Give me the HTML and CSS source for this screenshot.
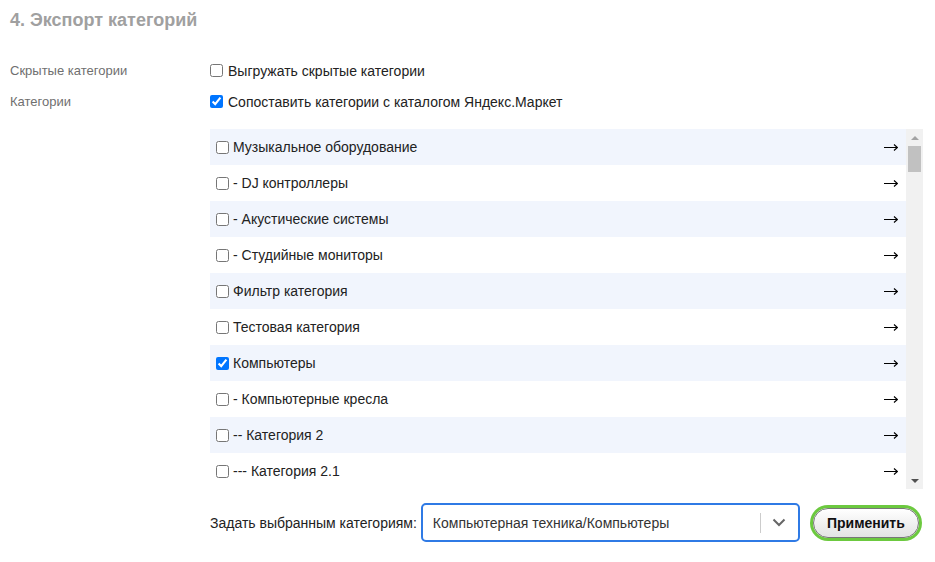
FILE: index.html
```html
<!DOCTYPE html>
<html lang="ru">
<head>
<meta charset="utf-8">
<title>Экспорт категорий</title>
<link rel="stylesheet" href="styles.css">
</head>
<body>
<div class="page">
  <h2 class="title">4. Экспорт категорий</h2>
  <div class="field">
    <div class="field-label">Скрытые категории</div>
    <label class="opt"><input type="checkbox"> Выгружать скрытые категории</label>
  </div>
  <div class="field">
    <div class="field-label">Категории</div>
    <label class="opt"><input type="checkbox" checked> Сопоставить категории с каталогом Яндекс.Маркет</label>
  </div>
  <div class="field field-list">
    <div class="field-label"></div>
    <div class="content">
      <div class="listbox">
        <div class="list">
          <div class="row alt"><label><input type="checkbox"> Музыкальное оборудование</label><svg class="arrow" width="14" height="9" viewBox="0 0 14 9"><path d="M0 4.5H13.5M10 1.5L13.5 4.5L10 7.5" fill="none" stroke="#000" stroke-width="1.2"/></svg></div>
          <div class="row"><label><input type="checkbox"> - DJ контроллеры</label><svg class="arrow" width="14" height="9" viewBox="0 0 14 9"><path d="M0 4.5H13.5M10 1.5L13.5 4.5L10 7.5" fill="none" stroke="#000" stroke-width="1.2"/></svg></div>
          <div class="row alt"><label><input type="checkbox"> - Акустические системы</label><svg class="arrow" width="14" height="9" viewBox="0 0 14 9"><path d="M0 4.5H13.5M10 1.5L13.5 4.5L10 7.5" fill="none" stroke="#000" stroke-width="1.2"/></svg></div>
          <div class="row"><label><input type="checkbox"> - Студийные мониторы</label><svg class="arrow" width="14" height="9" viewBox="0 0 14 9"><path d="M0 4.5H13.5M10 1.5L13.5 4.5L10 7.5" fill="none" stroke="#000" stroke-width="1.2"/></svg></div>
          <div class="row alt"><label><input type="checkbox"> Фильтр категория</label><svg class="arrow" width="14" height="9" viewBox="0 0 14 9"><path d="M0 4.5H13.5M10 1.5L13.5 4.5L10 7.5" fill="none" stroke="#000" stroke-width="1.2"/></svg></div>
          <div class="row"><label><input type="checkbox"> Тестовая категория</label><svg class="arrow" width="14" height="9" viewBox="0 0 14 9"><path d="M0 4.5H13.5M10 1.5L13.5 4.5L10 7.5" fill="none" stroke="#000" stroke-width="1.2"/></svg></div>
          <div class="row alt"><label><input type="checkbox" checked> Компьютеры</label><svg class="arrow" width="14" height="9" viewBox="0 0 14 9"><path d="M0 4.5H13.5M10 1.5L13.5 4.5L10 7.5" fill="none" stroke="#000" stroke-width="1.2"/></svg></div>
          <div class="row"><label><input type="checkbox"> - Компьютерные кресла</label><svg class="arrow" width="14" height="9" viewBox="0 0 14 9"><path d="M0 4.5H13.5M10 1.5L13.5 4.5L10 7.5" fill="none" stroke="#000" stroke-width="1.2"/></svg></div>
          <div class="row alt"><label><input type="checkbox"> -- Категория 2</label><svg class="arrow" width="14" height="9" viewBox="0 0 14 9"><path d="M0 4.5H13.5M10 1.5L13.5 4.5L10 7.5" fill="none" stroke="#000" stroke-width="1.2"/></svg></div>
          <div class="row"><label><input type="checkbox"> --- Категория 2.1</label><svg class="arrow" width="14" height="9" viewBox="0 0 14 9"><path d="M0 4.5H13.5M10 1.5L13.5 4.5L10 7.5" fill="none" stroke="#000" stroke-width="1.2"/></svg></div>
        </div>
        <div class="scrollbar">
          <div class="sb-btn"><span class="tri-up"></span></div>
          <div class="sb-track"><div class="sb-thumb"></div></div>
          <div class="sb-btn"><span class="tri-down"></span></div>
        </div>
      </div>
      <div class="assign">
        <span class="assign-label">Задать выбранным категориям:</span>
        <div class="select">
          <span class="select-value">Компьютерная техника/Компьютеры</span>
          <span class="select-sep"></span>
          <svg class="chev" width="14" height="9" viewBox="0 0 14 9"><polyline points="1.5,1.5 7,7 12.5,1.5" fill="none" stroke="#666" stroke-width="2"/></svg>
        </div>
        <button class="apply" type="button">Применить</button>
      </div>
    </div>
  </div>
</div>
</body>
</html>
```
FILE: styles.css
```css
html, body {
  margin: 0;
  padding: 0;
  background: #fff;
}
body {
  font-family: "Liberation Sans", Arial, sans-serif;
  color: #222;
}
.page {
  padding: 8px 12px 0 10px;
}
.title {
  margin: 0 0 23px 0;
  font-size: 18px;
  line-height: 24px;
  font-weight: bold;
  color: #a0a0a0;
}
.field {
  display: flex;
  align-items: center;
  height: 31px;
}
.field-label {
  width: 200px;
  flex: none;
  font-size: 13px;
  color: #6f6f6f;
}
.opt {
  display: flex;
  align-items: center;
  font-size: 14px;
  color: #222;
}
.opt input {
  margin: 0 5px 0 0;
  width: 13px;
  height: 13px;
}
.field-list {
  height: auto;
  align-items: flex-start;
  margin-top: 12px;
}
.content {
  flex: 1;
}
.listbox {
  display: flex;
  height: 360px;
}
.list {
  flex: 1;
  overflow: hidden;
}
.row {
  height: 36px;
  display: flex;
  align-items: center;
  justify-content: space-between;
  font-size: 14px;
  padding: 0 8px 0 0;
}
.row.alt {
  background: #f1f5fd;
}
.row label {
  display: flex;
  align-items: center;
}
.row input {
  margin: 0 4px 0 6px;
  width: 13px;
  height: 13px;
}
.arrow {
  display: block;
  flex: none;
}
.scrollbar {
  width: 17px;
  flex: none;
  background: #f1f1f1;
  display: flex;
  flex-direction: column;
}
.sb-btn {
  height: 17px;
  display: flex;
  align-items: center;
  justify-content: center;
}
.tri-up {
  width: 0;
  height: 0;
  border-left: 4px solid transparent;
  border-right: 4px solid transparent;
  border-bottom: 4px solid #a3a3a3;
}
.tri-down {
  width: 0;
  height: 0;
  border-left: 4px solid transparent;
  border-right: 4px solid transparent;
  border-top: 4px solid #505050;
}
.sb-track {
  flex: 1;
  padding: 0 2px;
}
.sb-thumb {
  height: 26px;
  background: #c1c1c1;
}
.assign {
  display: flex;
  align-items: center;
  margin-top: 14px;
}
.assign-label {
  font-size: 14px;
  color: #222;
}
.select {
  margin-left: 4px;
  width: 379px;
  height: 39px;
  box-sizing: border-box;
  border: 2px solid #2f7ae5;
  border-radius: 5px;
  display: flex;
  align-items: center;
  padding: 0 12px 0 10px;
}
.select-value {
  flex: 1;
  font-size: 14px;
  color: #333;
}
.select-sep {
  width: 1px;
  height: 20px;
  background: #ccc;
  margin-right: 11px;
}
.chev {
  display: block;
}
.apply {
  margin-left: 13px;
  width: 106px;
  height: 30px;
  box-sizing: border-box;
  border: 1px solid #777;
  border-radius: 15px;
  background: linear-gradient(#ffffff, #e3e3e3);
  box-shadow: 0 0 0 3px #6cc93f;
  font-family: "Liberation Sans", Arial, sans-serif;
  font-size: 14px;
  font-weight: bold;
  color: #111;
  padding: 0;
}
```
